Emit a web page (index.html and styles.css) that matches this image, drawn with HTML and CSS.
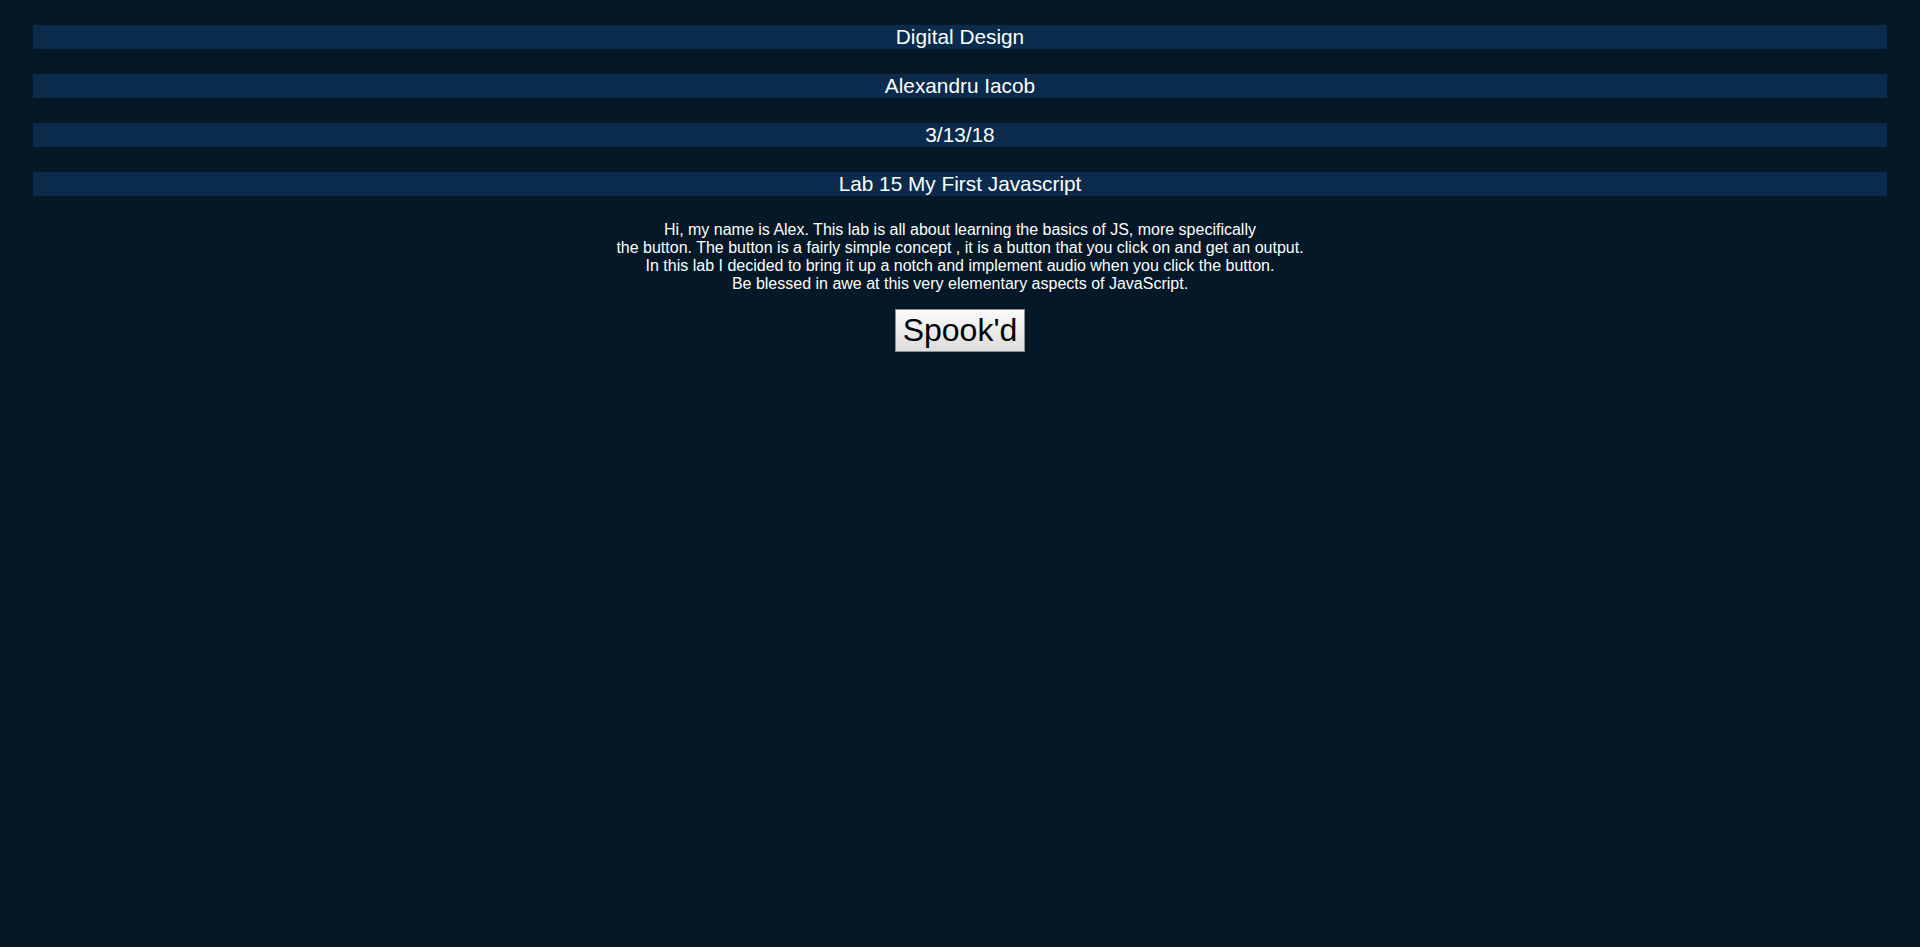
FILE: index.html
```html
<!DOCTYPE html>
<html>
<head>
<meta charset="utf-8">
<title>Lab 15</title>
<link rel="stylesheet" href="styles.css">
</head>
<body>
<div class="page">
  <div class="bar">Digital Design</div>
  <div class="bar">Alexandru Iacob</div>
  <div class="bar">3/13/18</div>
  <div class="bar">Lab 15 My First Javascript</div>
  <p class="intro">Hi, my name is Alex. This lab is all about learning the basics of JS, more specifically<br>the button. The button is a fairly simple concept , it is a button that you click on and get an output.<br>In this lab I decided to bring it up a notch and implement audio when you click the button.<br>Be blessed in awe at this very elementary aspects of JavaScript.</p>
  <div class="actions"><button class="spook" type="button">Spook'd</button></div>
</div>
</body>
</html>
```
FILE: styles.css
```css
html, body {
  margin: 0;
  padding: 0;
  background: #041828;
}
body {
  font-family: "Liberation Sans", Arial, sans-serif;
  color: #ffffff;
}
.page {
  padding: 25px 33px;
  display: flex;
  flex-direction: column;
  gap: 25px;
}
.bar {
  background: #0a2b4c;
  height: 24px;
  line-height: 24px;
  font-size: 20.8px;
  text-align: center;
}
.intro {
  margin: 0;
  font-size: 16px;
  line-height: 18px;
  text-align: center;
}
.actions {
  margin-top: -9px;
  text-align: center;
}
.spook {
  font-family: "Liberation Sans", Arial, sans-serif;
  font-size: 32px;
  color: #000;
  padding: 1px 7px;
  border: 1px solid #8f8f8f;
  border-radius: 0;
  background: linear-gradient(#fafafa, #dcdcdc);
  height: 43px;
}
```
